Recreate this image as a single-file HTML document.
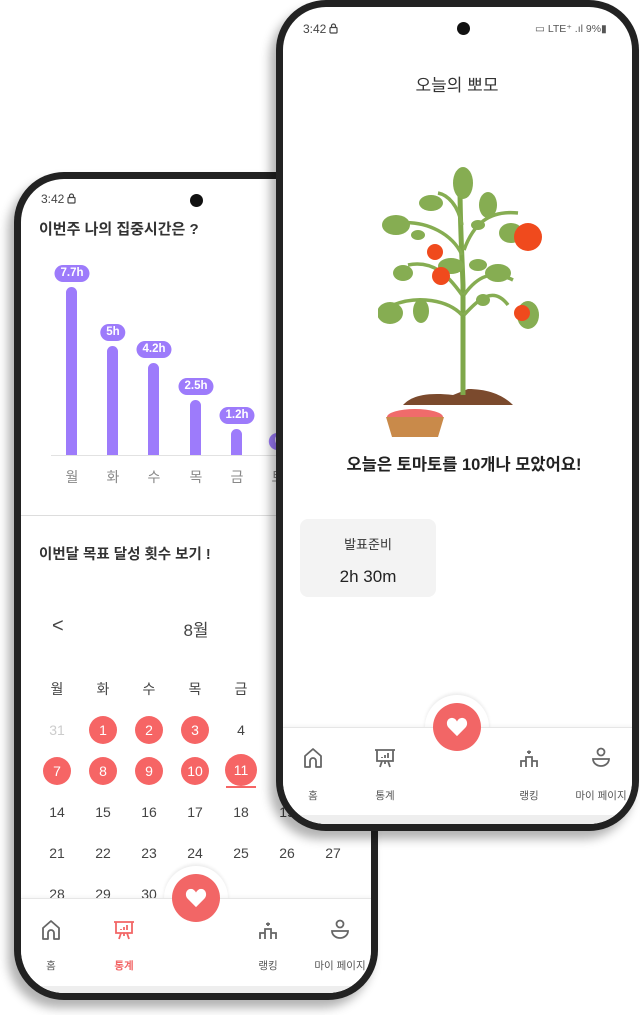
<!DOCTYPE html>
<html><head><meta charset="utf-8"><style>
*{margin:0;padding:0;box-sizing:border-box}
body{width:640px;height:1015px;background:#fff;position:relative;overflow:hidden;font-family:"Liberation Sans","Noto Sans CJK KR",sans-serif;color:#333}
.frame{position:absolute;background:#222;border-radius:50px;box-shadow:-6px 8px 10px rgba(0,0,0,.3)}
.screen{position:absolute;left:7px;top:7px;right:7px;bottom:7px;background:#fff;border-radius:43px;overflow:hidden}
.a{position:absolute;white-space:nowrap}
.c{transform:translateX(-50%)}
.bar{position:absolute;width:11px;background:#9d7bfb;border-radius:6px 6px 0 0}
.pill{position:absolute;background:#9d7bfb;color:#fff;font-size:11.5px;font-weight:bold;height:17px;line-height:17px;padding:0 6px;border-radius:9px;transform:translateX(-50%)}
.day{position:absolute;width:28px;height:28px;line-height:28px;text-align:center;font-size:14px;color:#444;transform:translate(-50%,-50%)}
.red{background:#f66565;color:#fff;border-radius:50%}
.nav{position:absolute;left:0;right:0;background:#fff;border-top:1px solid #e6e6e6;box-shadow:0 -2px 3px rgba(0,0,0,.04)}
.notch{position:absolute;width:64px;height:64px;border-radius:50%;background:#fff;box-shadow:0 -2px 3px rgba(0,0,0,.08);transform:translate(-50%,-50%)}
.heart{position:absolute;width:48px;height:48px;border-radius:50%;background:#f26666;transform:translate(-50%,-50%);display:flex;align-items:center;justify-content:center}
.lbl{position:absolute;font-size:10.5px;color:#555;transform:translateX(-50%);white-space:nowrap}
.ic{position:absolute;transform:translate(-50%,-50%)}
.lock{display:inline-block;vertical-align:-1px;margin-left:3px}
</style></head><body>

<!-- LEFT PHONE -->
<div class="frame" style="left:14px;top:172px;width:364px;height:828px">
<div class="screen">
 <div class="a" style="left:20px;top:13px;font-size:12px;color:#444">3:42<svg class="lock" width="9" height="11" viewBox="0 0 9 11" fill="none" stroke="#444" stroke-width="1.2"><rect x="1" y="4.5" width="7" height="5.5" rx="1"/><path d="M2.5 4.5V3A2 2 0 0 1 6.5 3V4.5"/></svg></div>
 <div class="a" style="left:169px;top:15px;width:13px;height:13px;border-radius:50%;background:#111"></div>
 <div class="a" style="left:18px;top:39px;font-size:15px;font-weight:bold;color:#333">이번주 나의 집중시간은 ?</div>
 <div class="bar" style="left:45px;top:108px;height:168px"></div>
 <div class="pill" style="left:51px;top:86px">7.7h</div>
 <div class="bar" style="left:86px;top:167px;height:109px"></div>
 <div class="pill" style="left:92px;top:145px">5h</div>
 <div class="bar" style="left:127px;top:184px;height:92px"></div>
 <div class="pill" style="left:133px;top:162px">4.2h</div>
 <div class="bar" style="left:169px;top:221px;height:55px"></div>
 <div class="pill" style="left:175px;top:199px">2.5h</div>
 <div class="bar" style="left:210px;top:250px;height:26px"></div>
 <div class="pill" style="left:216px;top:228px">1.2h</div>
 <div class="pill" style="left:257px;top:254px">0</div>
 <div class="a" style="left:30px;top:276px;width:260px;height:1px;background:#e2e2e2"></div>
 <div class="a c" style="left:51px;top:288px;font-size:14px;color:#888">월</div>
 <div class="a c" style="left:92px;top:288px;font-size:14px;color:#888">화</div>
 <div class="a c" style="left:133px;top:288px;font-size:14px;color:#888">수</div>
 <div class="a c" style="left:175px;top:288px;font-size:14px;color:#888">목</div>
 <div class="a c" style="left:216px;top:288px;font-size:14px;color:#888">금</div>
 <div class="a c" style="left:257px;top:288px;font-size:14px;color:#888">토</div>
 <div class="a" style="left:0;right:0;top:336px;height:1px;background:#ddd"></div>
 <div class="a" style="left:18px;top:364px;font-size:14.5px;font-weight:bold;color:#333">이번달 목표 달성 횟수 보기 !</div>
 <div class="a" style="left:31px;top:436px;font-size:20px;color:#444">&lt;</div>
 <div class="a c" style="left:175px;top:437px;font-size:17px;color:#444">8월</div>
 <div class="day" style="left:36px;top:510px">월</div><div class="day" style="left:82px;top:510px">화</div><div class="day" style="left:128px;top:510px">수</div><div class="day" style="left:174px;top:510px">목</div><div class="day" style="left:220px;top:510px">금</div>
 <div class="day" style="left:36px;top:551px;color:#ccc">31</div>
 <div class="day red" style="left:82px;top:551px">1</div><div class="day red" style="left:128px;top:551px">2</div><div class="day red" style="left:174px;top:551px">3</div><div class="day" style="left:220px;top:551px">4</div>
 <div class="day red" style="left:36px;top:592px">7</div><div class="day red" style="left:82px;top:592px">8</div><div class="day red" style="left:128px;top:592px">9</div><div class="day red" style="left:174px;top:592px">10</div>
 <div class="day red" style="left:220px;top:591px;width:32px;height:32px;line-height:32px">11</div>
 <div class="a" style="left:205px;top:607px;width:30px;height:2px;background:#f66565"></div>
 <div class="day" style="left:36px;top:633px">14</div><div class="day" style="left:82px;top:633px">15</div><div class="day" style="left:128px;top:633px">16</div><div class="day" style="left:174px;top:633px">17</div><div class="day" style="left:220px;top:633px">18</div><div class="day" style="left:266px;top:633px">19</div>
 <div class="day" style="left:36px;top:674px">21</div><div class="day" style="left:82px;top:674px">22</div><div class="day" style="left:128px;top:674px">23</div><div class="day" style="left:174px;top:674px">24</div><div class="day" style="left:220px;top:674px">25</div><div class="day" style="left:266px;top:674px">26</div><div class="day" style="left:312px;top:674px">27</div>
 <div class="day" style="left:36px;top:715px">28</div><div class="day" style="left:82px;top:715px">29</div><div class="day" style="left:128px;top:715px">30</div>
 <div class="notch" style="left:175px;top:719px"></div>
 <div class="nav" style="top:719px;height:100px"></div>
 <div class="a" style="left:0;right:0;top:807px;height:12px;background:#eee"></div>
 <div class="heart" style="left:175px;top:719px"><svg width="22" height="20" viewBox="0 0 24 22"><path d="M12 21 L3 12 C-1 8 1 1 6.5 1 C9 1 11 3 12 5 C13 3 15 1 17.5 1 C23 1 25 8 21 12 Z" fill="#fff"/></svg></div>
 <svg class="ic" style="left:30px;top:751px" width="24" height="24" viewBox="0 0 24 24" fill="none" stroke="#666" stroke-width="1.8" stroke-linejoin="round"><path d="M4 21V10L12 3L20 10V21H15V15A3 3 0 0 0 9 15V21Z"/></svg>
 <svg class="ic" style="left:103px;top:751px" width="24" height="24" viewBox="0 0 24 24" fill="none" stroke="#f26666" stroke-width="1.8"><path d="M2 4H22M4 4V15H20V4M9 15L7 21M15 15L17 21M12 15V18M9 12V11M12 12V9M15 12V7"/></svg>
 <svg class="ic" style="left:247px;top:751px" width="24" height="24" viewBox="0 0 24 24" fill="none" stroke="#666" stroke-width="1.8"><path d="M4 21V15H9V21M9 15V11H15V21M15 15H20V21M12 4.5L12 8M10 6H14"/></svg>
 <svg class="ic" style="left:319px;top:751px" width="24" height="24" viewBox="0 0 24 24" fill="none" stroke="#666" stroke-width="1.8"><circle cx="12" cy="6" r="3.5"/><path d="M4 13H20A8 7 0 0 1 4 13Z"/></svg>
 <div class="lbl" style="left:30px;top:779px">홈</div>
 <div class="lbl" style="left:103px;top:779px;color:#f26666;font-weight:bold">통계</div>
 <div class="lbl" style="left:247px;top:779px">랭킹</div>
 <div class="lbl" style="left:319px;top:779px">마이 페이지</div>
</div></div>

<!-- RIGHT PHONE -->
<div class="frame" style="left:276px;top:0;width:363px;height:831px">
<div class="screen">
 <div class="a" style="left:20px;top:15px;font-size:12px;color:#444">3:42<svg class="lock" width="9" height="11" viewBox="0 0 9 11" fill="none" stroke="#444" stroke-width="1.2"><rect x="1" y="4.5" width="7" height="5.5" rx="1"/><path d="M2.5 4.5V3A2 2 0 0 1 6.5 3V4.5"/></svg></div>
 <div class="a" style="left:174px;top:15px;width:13px;height:13px;border-radius:50%;background:#111"></div>
 <div class="a" style="left:252px;top:16px;font-size:10.5px;color:#555">▭ LTE⁺ .ıl 9%▮</div>
 <div class="a c" style="left:174px;top:64px;font-size:17px;color:#333">오늘의 뽀모</div>
 <svg class="a" style="left:95px;top:158px" width="170" height="280" viewBox="0 0 170 280">
  <path d="M75 230 C40 226 30 235 25 240 L135 240 C125 230 110 224 90 224Z" fill="#7b4a2d"/>
  <path d="M85 230 L85 120 C84 90 82 60 82 20" stroke="#7fa84a" stroke-width="5" fill="none"/>
  <g stroke="#86ad52" stroke-width="3.5" fill="none">
   <path d="M84 130 C70 110 55 95 30 100"/><path d="M84 150 C70 135 40 130 15 140"/>
   <path d="M86 130 C100 110 115 105 135 115"/><path d="M86 150 C100 135 115 120 130 140"/>
   <path d="M84 90 C75 70 50 55 20 58"/><path d="M86 85 C95 60 110 45 140 48"/>
   <path d="M84 60 C80 40 70 30 60 28"/>
  </g>
  <g fill="#86ad52">
   <ellipse cx="85" cy="18" rx="10" ry="16" /><ellipse cx="18" cy="60" rx="14" ry="10"/><ellipse cx="53" cy="38" rx="12" ry="8"/>
   <ellipse cx="110" cy="40" rx="9" ry="13"/><ellipse cx="133" cy="68" rx="12" ry="10"/><ellipse cx="25" cy="108" rx="10" ry="8"/>
   <ellipse cx="12" cy="148" rx="13" ry="11"/><ellipse cx="43" cy="146" rx="8" ry="12"/><ellipse cx="120" cy="108" rx="13" ry="9"/>
   <ellipse cx="150" cy="150" rx="11" ry="14"/><ellipse cx="73" cy="101" rx="13" ry="8"/><ellipse cx="100" cy="100" rx="9" ry="6"/>
   <ellipse cx="105" cy="135" rx="7" ry="6"/><ellipse cx="100" cy="60" rx="7" ry="5"/><ellipse cx="40" cy="70" rx="7" ry="5"/>
  </g>
  <g fill="#f04a1d"><circle cx="150" cy="72" r="14"/><circle cx="57" cy="87" r="8"/><circle cx="63" cy="111" r="9"/><circle cx="144" cy="148" r="8"/></g>
  <ellipse cx="37" cy="252" rx="28" ry="8" fill="#f06b6b"/>
  <path d="M8 252 H66 L60 272 H14Z" fill="#c98a4a"/>
 </svg>
 <div class="a c" style="left:181px;top:444px;font-size:16.5px;font-weight:bold;color:#222">오늘은 토마토를 10개나 모았어요!</div>
 <div class="a" style="left:17px;top:512px;width:136px;height:78px;background:#f3f3f3;border-radius:8px"></div>
 <div class="a c" style="left:85px;top:527px;font-size:13px;color:#333">발표준비</div>
 <div class="a c" style="left:85px;top:560px;font-size:17px;color:#222">2h 30m</div>
 <div class="notch" style="left:174px;top:720px"></div>
 <div class="nav" style="top:720px;height:100px"></div>
 <div class="a" style="left:0;right:0;top:808px;height:12px;background:#eee"></div>
 <div class="heart" style="left:174px;top:720px"><svg width="22" height="20" viewBox="0 0 24 22"><path d="M12 21 L3 12 C-1 8 1 1 6.5 1 C9 1 11 3 12 5 C13 3 15 1 17.5 1 C23 1 25 8 21 12 Z" fill="#fff"/></svg></div>
 <svg class="ic" style="left:30px;top:751px" width="24" height="24" viewBox="0 0 24 24" fill="none" stroke="#666" stroke-width="1.8" stroke-linejoin="round"><path d="M4 21V10L12 3L20 10V21H15V15A3 3 0 0 0 9 15V21Z"/></svg>
 <svg class="ic" style="left:102px;top:751px" width="24" height="24" viewBox="0 0 24 24" fill="none" stroke="#666" stroke-width="1.8"><path d="M2 4H22M4 4V15H20V4M9 15L7 21M15 15L17 21M12 15V18M9 12V11M12 12V9M15 12V7"/></svg>
 <svg class="ic" style="left:246px;top:751px" width="24" height="24" viewBox="0 0 24 24" fill="none" stroke="#666" stroke-width="1.8"><path d="M4 21V15H9V21M9 15V11H15V21M15 15H20V21M12 4.5L12 8M10 6H14"/></svg>
 <svg class="ic" style="left:318px;top:751px" width="24" height="24" viewBox="0 0 24 24" fill="none" stroke="#666" stroke-width="1.8"><circle cx="12" cy="6" r="3.5"/><path d="M4 13H20A8 7 0 0 1 4 13Z"/></svg>
 <div class="lbl" style="left:30px;top:781px">홈</div>
 <div class="lbl" style="left:102px;top:781px">통계</div>
 <div class="lbl" style="left:246px;top:781px">랭킹</div>
 <div class="lbl" style="left:318px;top:781px">마이 페이지</div>
</div></div>
</body></html>
